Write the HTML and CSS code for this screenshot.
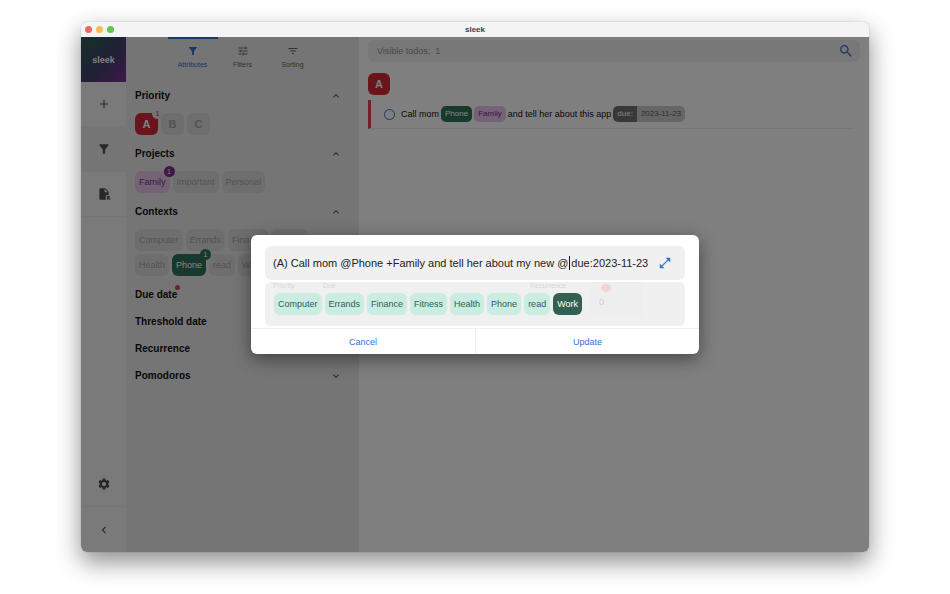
FILE: index.html
```html
<!DOCTYPE html>
<html lang="en">
<head>
<meta charset="utf-8">
<title>sleek</title>
<link rel="stylesheet" href="styles.css">
</head>
<body>
<div class="window">
  <header class="titlebar">
    <div class="lights"><span class="light red"></span><span class="light yellow"></span><span class="light green"></span></div>
    <span class="title">sleek</span>
  </header>
  <div class="app">
    <nav class="nav">
      <div class="logo">sleek</div>
      <button class="nav-btn" aria-label="Add todo"><svg viewBox="0 0 24 24"><path d="M19 13h-6v6h-2v-6H5v-2h6V5h2v6h6v2z"/></svg></button>
      <button class="nav-btn active" aria-label="Toggle drawer"><svg viewBox="0 0 24 24"><path d="M4.25 5.61C6.27 8.2 10 13 10 13v6c0 .55.45 1 1 1h2c.55 0 1-.45 1-1v-6s3.72-4.8 5.74-7.39c.51-.66.04-1.61-.79-1.61H5.04c-.83 0-1.3.95-.79 1.61z"/></svg></button>
      <button class="nav-btn" aria-label="Open file"><svg viewBox="0 0 24 24"><path d="M14 2H6c-1.1 0-1.99.9-1.99 2L4 20c0 1.1.89 2 1.99 2H15v-8h5V8l-6-6zm-1 7V3.5L18.5 9H13zm4 12.66V16h5.66v2h-2.24l2.95 2.95-1.41 1.41L19 19.41v2.24h-2z"/></svg></button>
      <div class="spacer"></div>
      <button class="nav-btn" aria-label="Settings"><svg viewBox="0 0 24 24"><path d="M19.14 12.94c.04-.3.06-.61.06-.94 0-.32-.02-.64-.07-.94l2.03-1.58c.18-.14.23-.41.12-.61l-1.92-3.32c-.12-.22-.37-.29-.59-.22l-2.39.96c-.5-.38-1.03-.7-1.62-.94l-.36-2.54c-.04-.24-.24-.41-.48-.41h-3.84c-.24 0-.43.17-.47.41l-.36 2.54c-.59.24-1.13.57-1.62.94l-2.39-.96c-.22-.08-.47 0-.59.22L2.74 8.87c-.12.21-.08.47.12.61l2.03 1.58c-.05.3-.09.63-.09.94s.02.64.07.94l-2.03 1.58c-.18.14-.23.41-.12.61l1.92 3.32c.12.22.37.29.59.22l2.39-.96c.5.38 1.03.7 1.62.94l.36 2.54c.05.24.24.41.48.41h3.84c.24 0 .44-.17.47-.41l.36-2.54c.59-.24 1.13-.56 1.62-.94l2.39.96c.22.08.47 0 .59-.22l1.92-3.32c.12-.22.07-.47-.12-.61l-2.01-1.58zM12 15.6c-1.98 0-3.6-1.62-3.6-3.6s1.62-3.6 3.6-3.6 3.6 1.62 3.6 3.6-1.62 3.6-3.6 3.6z"/></svg></button>
      <button class="nav-btn last" aria-label="Collapse navigation"><svg viewBox="0 0 24 24"><path d="M15.41 7.41 14 6l-6 6 6 6 1.41-1.41L10.83 12z"/></svg></button>
    </nav>

    <aside class="drawer">
      <div class="tabs">
        <button class="tab selected"><svg viewBox="0 0 24 24"><path d="M4.25 5.61C6.27 8.2 10 13 10 13v6c0 .55.45 1 1 1h2c.55 0 1-.45 1-1v-6s3.72-4.8 5.74-7.39c.51-.66.04-1.61-.79-1.61H5.04c-.83 0-1.3.95-.79 1.61z"/></svg>Attributes</button>
        <button class="tab"><svg viewBox="0 0 24 24"><path d="M3 17v2h6v-2H3zM3 5v2h10V5H3zm10 16v-2h8v-2h-8v-2h-2v6h2zM7 9v2H3v2h4v2h2V9H7zm14 4v-2H11v2h10zm-6-4h2V7h4V5h-4V3h-2v6z"/></svg>Filters</button>
        <button class="tab"><svg viewBox="0 0 24 24"><path d="M10 18h4v-2h-4v2zM3 6v2h18V6H3zm3 7h12v-2H6v2z"/></svg>Sorting</button>
      </div>

      <button class="section"><span>Priority</span><svg viewBox="0 0 24 24"><path d="m12 8-6 6 1.41 1.41L12 10.83l4.59 4.58L18 14z"/></svg></button>
      <div class="chips">
        <button class="chip prio prio-a">A<span class="badge light-badge">1</span></button>
        <button class="chip prio">B</button>
        <button class="chip prio">C</button>
      </div>

      <button class="section"><span>Projects</span><svg viewBox="0 0 24 24"><path d="m12 8-6 6 1.41 1.41L12 10.83l4.59 4.58L18 14z"/></svg></button>
      <div class="chips">
        <button class="chip project">Family<span class="badge purple-badge">1</span></button>
        <button class="chip">Important</button>
        <button class="chip">Personal</button>
      </div>

      <button class="section"><span>Contexts</span><svg viewBox="0 0 24 24"><path d="m12 8-6 6 1.41 1.41L12 10.83l4.59 4.58L18 14z"/></svg></button>
      <div class="chips">
        <button class="chip">Computer</button>
        <button class="chip">Errands</button>
        <button class="chip">Finance</button>
        <button class="chip">Fitness</button>
        <button class="chip">Health</button>
        <button class="chip context">Phone<span class="badge green-badge">1</span></button>
        <button class="chip">read</button>
        <button class="chip">Work</button>
      </div>

      <button class="section"><span class="dotted">Due date</span><svg viewBox="0 0 24 24"><path d="M7.41 8.59 12 13.17l4.59-4.58L18 10l-6 6-6-6z"/></svg></button>
      <button class="section"><span>Threshold date</span><svg viewBox="0 0 24 24"><path d="M7.41 8.59 12 13.17l4.59-4.58L18 10l-6 6-6-6z"/></svg></button>
      <button class="section"><span>Recurrence</span><svg viewBox="0 0 24 24"><path d="M7.41 8.59 12 13.17l4.59-4.58L18 10l-6 6-6-6z"/></svg></button>
      <button class="section"><span>Pomodoros</span><svg viewBox="0 0 24 24"><path d="M7.41 8.59 12 13.17l4.59-4.58L18 10l-6 6-6-6z"/></svg></button>
    </aside>

    <main class="main">
      <label class="search">
        <input type="text" aria-label="Search todos" placeholder="Visible todos:&nbsp; 1">
        <svg viewBox="0 0 24 24"><path d="M15.5 14h-.79l-.28-.27C15.41 12.59 16 11.11 16 9.5 16 5.91 13.09 3 9.5 3S3 5.91 3 9.5 5.91 16 9.5 16c1.61 0 3.09-.59 4.23-1.57l.27.28v.79l5 4.99L20.49 19l-4.99-5zm-6 0C7.01 14 5 11.99 5 9.5S7.01 5 9.5 5 14 7.01 14 9.5 11.99 14 9.5 14z"/></svg>
      </label>
      <div class="group"><span class="chip prio prio-a">A</span></div>
      <div class="todo">
        <input type="checkbox" class="check" aria-label="Complete todo">
        <span>Call mom</span>
        <button class="tag context">Phone</button>
        <button class="tag project">Family</button>
        <span>and tell her about this app</span>
        <button class="tag due"><span class="due-key">due:</span><span class="due-value">2023-11-23</span></button>
      </div>
    </main>

    <div class="backdrop">
      <div class="dialog" role="dialog" aria-modal="true" aria-label="Edit todo">
        <div class="dialog-body">
          <div class="field">
            <input type="text" aria-label="Todo" value="(A) Call mom @Phone +Family and tell her about my new @ due:2023-11-23">
            <span class="caret"></span>
            <button class="expand" aria-label="Expand"><svg viewBox="0 0 24 24"><path d="M21 11V3h-8l3.29 3.29-10 10L3 13v8h8l-3.29-3.29 10-10z"/></svg></button>
          </div>
          <div class="attributes">
            <div class="faded">
              <span>Priority</span>
              <span>Due</span>
              <span>Recurrence</span>
              <span class="pomodoro"><svg viewBox="0 0 12 10"><ellipse cx="6" cy="5" rx="5" ry="4"/></svg><span>0</span></span>
            </div>
            <div class="suggestions">
              <button class="chip mint">Computer</button>
              <button class="chip mint">Errands</button>
              <button class="chip mint">Finance</button>
              <button class="chip mint">Fitness</button>
              <button class="chip mint">Health</button>
              <button class="chip mint">Phone</button>
              <button class="chip mint">read</button>
              <button class="chip highlighted">Work</button>
            </div>
          </div>
        </div>
        <div class="actions"><button>Cancel</button><button>Update</button></div>
      </div>
    </div>
  </div>
</div>
</body>
</html>
```
FILE: styles.css
```css
* { box-sizing: border-box; }

body {
  margin: 0;
  height: 100vh;
  padding: 22px 81px 42px;
  background: #fff;
  color: #111;
  font: 9px/12px "Liberation Sans", Arial, sans-serif;
  overflow: hidden;
}

button, input { font: inherit; color: inherit; }
button { border: 0; padding: 0; background: none; cursor: pointer; }
svg { display: block; fill: currentColor; flex: none; }

.window {
  height: 100%;
  display: flex;
  flex-direction: column;
  border-radius: 6px;
  overflow: hidden;
  box-shadow: 0 0 1px rgba(0, 0, 0, .4), 0 10px 24px rgba(0, 0, 0, .45);
}

.titlebar {
  height: 15px;
  flex: none;
  display: grid;
  grid-template-columns: 1fr auto 1fr;
  align-items: center;
  padding: 0 4px;
  background: #f4f4f4;
}
.lights { display: flex; gap: 4px; }
.light { width: 7px; height: 7px; border-radius: 50%; }
.red { background: #ed6a5f; }
.yellow { background: #f5bf4f; }
.green { background: #61c554; }
.title { font-size: 8px; font-weight: bold; color: #3c3c3c; }

.app { position: relative; flex: 1; min-height: 0; display: flex; background: #fff; }

.nav { width: 45px; flex: none; display: flex; flex-direction: column; background: #f5f5f5; }
.logo {
  height: 45px;
  display: flex;
  align-items: center;
  justify-content: center;
  background: linear-gradient(135deg, #2e6052, #3c4468 50%, #7a3096);
  color: #fff;
  font-size: 9px;
  font-weight: bold;
}
.nav-btn {
  height: 45px;
  display: flex;
  align-items: center;
  justify-content: center;
  color: #505050;
  border-bottom: 1px solid #ebebeb;
}
.nav-btn.active { background: #ebebeb; }
.nav-btn.last { border-bottom: 0; }
.nav-btn svg { width: 14px; height: 14px; }
.spacer { flex: 1; }

.drawer { width: 233px; flex: none; padding: 0 9px; background: #ebebeb; }
.tabs { display: flex; justify-content: center; margin-bottom: 9px; }
.tab {
  width: 50px;
  height: 36px;
  display: flex;
  flex-direction: column;
  align-items: center;
  gap: 2px;
  padding-top: 6px;
  border-top: 2px solid transparent;
  color: #666;
  font-size: 7px;
}
.tab svg { width: 12px; height: 12px; }
.tab.selected { color: #3472cf; border-color: #3472cf; }

.section {
  width: 100%;
  height: 27px;
  display: flex;
  align-items: center;
  justify-content: space-between;
  padding-right: 8px;
  font-size: 10px;
  font-weight: bold;
}
.section svg { width: 12px; height: 12px; color: #555; }
.dotted { position: relative; }
.dotted::after {
  content: "";
  position: absolute;
  top: -4px;
  right: -3px;
  width: 5px;
  height: 5px;
  border-radius: 50%;
  background: #e0405a;
}

.chips { display: flex; flex-wrap: wrap; gap: 3px; padding: 4px 20px 5px 0; }
.chip {
  position: relative;
  height: 22px;
  display: flex;
  align-items: center;
  justify-content: center;
  padding: 0 4px;
  border-radius: 6px;
  background: #dcdcdc;
  color: #a6a6a6;
}
.prio { width: 22px; font-size: 11px; font-weight: bold; }
.chips .prio { width: 23px; }
.prio-a { background: #d42838; color: #fff; }
.project { background: #e6c6ea; color: #7a2f90; }
.context { background: #307558; color: #fff; }
.highlighted { background: #34604f; color: #fff; }
.badge {
  position: absolute;
  z-index: 1;
  top: -5px;
  right: -5px;
  width: 11px;
  height: 11px;
  border-radius: 50%;
  font: 7px/11px "Liberation Sans", Arial, sans-serif;
  text-align: center;
}
.light-badge { background: #e6e6e6; color: #d42838; }
.purple-badge { background: #7a2f90; color: #fff; }
.green-badge { background: #307558; color: #fff; }

.main { flex: 1; min-width: 0; padding: 3px 9px; }
.search {
  height: 22px;
  display: flex;
  align-items: center;
  padding: 0 6px 0 9px;
  border-radius: 6px;
  background: #f0f0f0;
}
.search input { flex: 1; min-width: 0; padding: 0; border: 0; outline: 0; background: none; }
.search input::placeholder { color: #949494; opacity: 1; }
.search svg { width: 16px; height: 16px; color: #3472cf; }
.group { display: flex; padding: 11px 0 5px; }
.todo {
  height: 29px;
  display: flex;
  align-items: center;
  gap: 2px;
  margin-right: 6px;
  padding-left: 13px;
  border-left: 3px solid #e0405a;
  border-bottom: 1px solid #efefef;
}
.check {
  appearance: none;
  width: 11px;
  height: 11px;
  margin: 0 4px 0 0;
  border: 1px solid #3472cf;
  border-radius: 50%;
}
.tag { height: 16px; padding: 0 4px; border-radius: 5px; font-size: 8px; }
.tag.due { display: flex; align-items: center; padding: 0; overflow: hidden; line-height: 16px; }
.due-key { padding: 0 4px; background: #707070; color: #fff; }
.due-value { padding: 0 4px; background: #ccc; color: #606060; }

.backdrop {
  position: absolute;
  z-index: 2;
  inset: 0;
  display: flex;
  align-items: center;
  justify-content: center;
  background: rgba(0, 0, 0, .5);
}
.dialog {
  width: 90%;
  max-width: 448px;
  border-radius: 6px;
  background: #fff;
  overflow: hidden;
  box-shadow: 0 5px 18px rgba(0, 0, 0, .45);
}
.dialog-body { display: grid; gap: 2px; padding: 11px 14px 2px; }
.field {
  position: relative;
  height: 34px;
  display: flex;
  align-items: center;
  gap: 4px;
  padding: 0 13px 0 8px;
  border-radius: 6px;
  background: #f0f0f0;
}
.field input {
  flex: 1;
  min-width: 0;
  padding: 0;
  border: 0;
  outline: 0;
  background: none;
  font-size: 11px;
  color: #222;
}
.caret { position: absolute; left: 304px; top: 10px; width: 1px; height: 14px; background: #111; }
.expand { color: #3472cf; }
.expand svg { width: 14px; height: 14px; }

.attributes { position: relative; height: 44px; border-radius: 6px; background: #f0f0f0; }
.faded {
  display: grid;
  grid-template-columns: 50px 207px 61px 52px;
  padding: 0 8px;
  color: #d8d8d8;
  font-size: 7px;
  line-height: 8px;
}
.pomodoro {
  height: 35px;
  padding: 1px 8px;
  border-radius: 6px;
  background: #eee;
  color: #cfcfcf;
  font-size: 9px;
  line-height: 18px;
}
.pomodoro svg { width: 12px; height: 10px; margin-left: 1px; fill: #f3d5cf; }
.suggestions { position: absolute; inset: 0; display: flex; align-items: center; gap: 3px; padding: 0 9px; }
.mint { background: #c9ede1; color: #34604f; }

.actions { display: grid; grid-template-columns: 1fr 1fr; border-top: 1px solid #f0f0f0; }
.actions button { height: 25px; color: #3472cf; }
.actions button + button { border-left: 1px solid #f0f0f0; }
```
